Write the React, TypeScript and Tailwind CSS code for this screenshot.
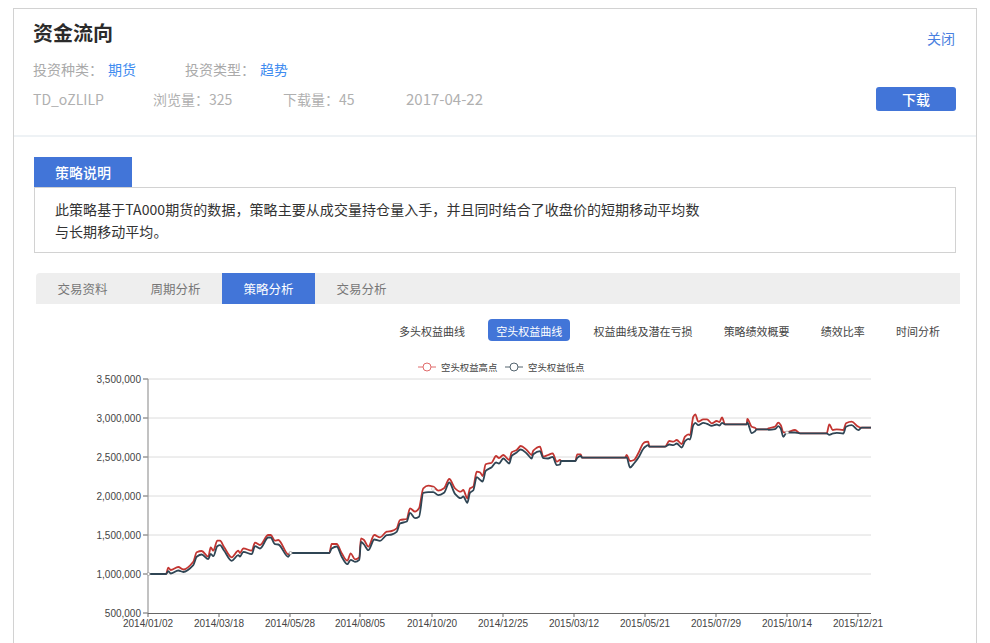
const cjk = 'font-["Noto_Sans_CJK_SC",sans-serif]';

// [x, high y, gap down to the low line]
const points: [number, number, number][] = [
  [148, 574, 0], [166, 574, 0], [168.3, 567.7, 3], [170.7, 570, 3], [178.3, 567, 3], [183.3, 569.5, 2], [193.3, 561.7, 3],
  [196.7, 552.3, 4], [201.7, 551, 3], [208.3, 556.7, 2], [210.7, 547.3, 6], [213.3, 550.7, 5], [217.3, 540.7, 5], [220, 540.7, 4],
  [224, 547, 3], [231.7, 557.3, 3], [238.3, 550.7, 4], [240, 553, 3], [243.3, 548.3, 3], [251.7, 550.7, 3], [255, 542.7, 3],
  [260, 545, 3], [268.3, 535, 2], [270.7, 535, 2], [275, 540.7, 3], [278.3, 540, 4], [288.3, 554.3, 2], [290.7, 553, 0],
  [329.3, 553, 0], [331.7, 544, 4], [336.7, 544, 2], [341.7, 553.3, 3], [347.3, 560.7, 3], [350.7, 553.3, 6], [355, 559.3, 2],
  [359.3, 557.3, 2], [361, 538.3, 3], [364, 540, 4], [368.3, 546.7, 3], [374.3, 535, 4], [380, 537.3, 3], [386.7, 531.7, 3],
  [391.7, 531, 3], [396.7, 528.3, 3], [400, 520, 3], [406.7, 519, 2], [410, 508.3, 4], [415, 511.7, 6], [419, 508.3, 8],
  [423.3, 488.3, 4], [428.3, 485.7, 6], [433.3, 486.7, 5], [438.3, 490.7, 4], [444, 488.3, 4], [449.3, 479, 3], [455, 488.3, 5],
  [460.7, 491.7, 6], [463.3, 490, 6], [467.3, 498.3, 4], [470, 488.3, 4], [473.3, 486.7, 3], [476.7, 471.7, 5], [480, 472.3, 7],
  [482.7, 476, 5], [485.7, 464.3, 6], [491.7, 462.7, 4], [496, 456, 6], [499, 458, 5], [503.3, 455, 3], [509.3, 460, 3],
  [511.7, 452.3, 3], [516.7, 450, 2], [520.7, 446, 3], [526.7, 450, 3], [531.7, 455, 3], [533.3, 450.7, 3], [540, 446.7, 4],
  [543.3, 456.7, 1], [548, 455, 3], [552.7, 453.3, 3], [556.7, 461.7, 3], [560, 460, 4], [561, 461, 0], [574, 461, 0],
  [575.3, 461, 0], [577.3, 454.3, 3], [580.7, 454.3, 1], [582, 457.7, 0], [625, 457.7, 0], [626.7, 455, 2], [630, 461, 6],
  [634, 460, 3], [638.3, 453.3, 4], [643.3, 443.3, 5], [645.5, 442, 4], [648.3, 441.7, 3], [649.3, 446.7, 0], [665, 446.7, 0],
  [669.3, 441, 3], [673.3, 441.7, 3], [676.7, 440, 3], [681.7, 444, 3], [685, 436.7, 4], [688.3, 434.3, 4], [690, 435, 4],
  [693.3, 416.7, 8], [695.3, 414.3, 8], [698.3, 421.7, 3], [703.3, 419.3, 3], [707, 419.3, 4], [711.7, 423.3, 2], [716.7, 421, 3],
  [719.5, 422, 3], [722, 417.3, 5], [725, 424.3, 0], [746.7, 424.3, 0], [747.3, 419, 3], [751.7, 426.7, 6], [755, 427.7, 3],
  [756.7, 429.3, 0], [767.3, 429.3, 0], [768.5, 428.3, 1], [775, 426.7, 2], [778.3, 422.7, 3], [780.7, 425, 3], [783.3, 432.3, 4],
  [786.7, 432.3, 0], [795, 430, 2], [800, 433.3, 0], [826.7, 433.3, 0], [829.3, 424.3, 10], [832.7, 430, 3], [836.7, 429.3, 3],
  [843.3, 430, 3], [846, 423.3, 3], [851.7, 421.7, 3], [858.3, 426.7, 3], [861.7, 427.7, 0], [871, 427.7, 0],
];

// smooth path that does not overshoot, close to what the chart library draws
function smooth(pts: [number, number][]) {
  const slope = (a: [number, number], b: [number, number]) => (b[1] - a[1]) / (b[0] - a[0]);
  const t = pts.map((p, i) => {
    if (i === 0 || i === pts.length - 1) return 0;
    const s0 = slope(pts[i - 1], p);
    const s1 = slope(p, pts[i + 1]);
    return s0 * s1 <= 0 ? 0 : (2 * s0 * s1) / (s0 + s1);
  });
  let d = `M${pts[0][0]} ${pts[0][1]}`;
  for (let i = 1; i < pts.length; i++) {
    const [x0, y0] = pts[i - 1];
    const [x1, y1] = pts[i];
    const h = (x1 - x0) / 3;
    d += `C${(x0 + h).toFixed(1)} ${(y0 + t[i - 1] * h).toFixed(1)} ${(x1 - h).toFixed(1)} ${(y1 - t[i] * h).toFixed(1)} ${x1} ${y1}`;
  }
  return d;
}

const highPath = smooth(points.map(([x, y]) => [x, y]));
const lowPath = smooth(points.map(([x, y, g]) => [x, g > 0 ? y + g + 0.5 : y]));

const yLabels = ['3,500,000', '3,000,000', '2,500,000', '2,000,000', '1,500,000', '1,000,000', '500,000'];
const xLabels = [
  ['2014/01/02', 148], ['2014/03/18', 219], ['2014/05/28', 290], ['2014/08/05', 360],
  ['2014/10/20', 432], ['2014/12/25', 503], ['2015/03/12', 574], ['2015/05/21', 645],
  ['2015/07/29', 716], ['2015/10/14', 787], ['2015/12/21', 858],
] as const;

const tabs = ['交易资料', '周期分析', '策略分析', '交易分析'];
const subTabs = ['多头权益曲线', '空头权益曲线', '权益曲线及潜在亏损', '策略绩效概要', '绩效比率', '时间分析'];

function Chart() {
  return (
    <svg viewBox="36 355 924 288" className="block h-[288px] w-[924px]">
      {yLabels.map((label, i) => {
        const y = 379 + i * 39;
        return (
          <g key={label}>
            {i < 6 && <line x1="148" x2="871" y1={y} y2={y} stroke="#dcdcdc" />}
            <line x1="143" x2="148" y1={y} y2={y} stroke="#666" />
            <text x="141" y={y + 3.5} textAnchor="end" fontSize="10" fill="#444" fontFamily="Liberation Sans">{label}</text>
          </g>
        );
      })}
      <line x1="148" x2="148" y1="379" y2="613" stroke="#999" strokeWidth="1.2" />
      <line x1="148" x2="871" y1="613.5" y2="613.5" stroke="#666" />
      {xLabels.map(([label, x]) => (
        <g key={label}>
          <line x1={x} x2={x} y1="613" y2="617" stroke="#666" />
          <text x={x} y="627" textAnchor="middle" fontSize="10" fill="#444" fontFamily="Liberation Sans">{label}</text>
        </g>
      ))}

      <path d={highPath} fill="none" stroke="#c23531" strokeWidth="1.8" />
      <path d={lowPath} fill="none" stroke="#2f4554" strokeWidth="1.8" />
      <circle cx="148.5" cy="574" r="1.5" fill="#fff" stroke="#999" strokeWidth="0.8" />
      <circle cx="290.5" cy="553" r="1.5" fill="#fff" stroke="#999" strokeWidth="0.8" />
      <circle cx="433" cy="489" r="1.5" fill="#fff" stroke="#ccc" strokeWidth="0.8" />
      <circle cx="787" cy="432.5" r="1.5" fill="#fff" stroke="#bbb" strokeWidth="0.8" />

      {/* legend */}
      <line x1="418" x2="436" y1="367" y2="367" stroke="#e06c6c" />
      <circle cx="427" cy="367" r="4" fill="#fff" stroke="#e06c6c" />
      <text x="441" y="370.5" fontSize="9.4" fill="#444" fontFamily="Noto Sans CJK SC">空头权益高点</text>
      <line x1="505" x2="523" y1="367" y2="367" stroke="#54646f" />
      <circle cx="514" cy="367" r="4" fill="#fff" stroke="#54646f" />
      <text x="528" y="370.5" fontSize="9.4" fill="#444" fontFamily="Noto Sans CJK SC">空头权益低点</text>
    </svg>
  );
}

export default function App() {
  return (
    <div className={`h-[643px] w-[990px] overflow-hidden bg-white pt-2 pl-[13px] ${cjk}`}>
      <div className="h-[700px] w-[964px] border border-[#d2d2d2]">
        {/* header */}
        <div className="h-[128px] border-b-2 border-[#eef2f5] pr-5 pl-[19px]">
          <div className="flex justify-between pt-[10px]">
            <h1 className="text-xl leading-7 font-bold text-[#2b2b2b]">资金流向</h1>
            <a className="mt-[9px] mr-px text-sm leading-5 text-[#4a80e0]">关闭</a>
          </div>
          <div className="mt-[11px] flex text-sm leading-5 text-[#aaaaaa]">
            <span>投资种类：</span>
            <span className="ml-[5px] w-[77px] text-[#3f8cf0]">期货</span>
            <span>投资类型：</span>
            <span className="ml-[5px] text-[#3f8cf0]">趋势</span>
          </div>
          <div className="mt-2 flex items-start text-sm leading-6 text-[#b0b0b0]">
            <span className="w-[120px]">TD_oZLILP</span>
            <span className="w-[130px]">浏览量：325</span>
            <span className="w-[123px]">下载量：45</span>
            <span className="text-[15px]">2017-04-22</span>
            <button className="ml-auto h-6 w-20 rounded-[3px] bg-[#4275d8] text-sm font-medium text-white">下载</button>
          </div>
        </div>

        {/* description */}
        <div className="mt-5 ml-5 w-[922px]">
          <div className="h-[30px] w-[98px] bg-[#4275d8] pl-[21px] text-sm leading-[30px] font-medium text-white">策略说明</div>
          <div className="h-[66px] border border-[#d2d2d2] px-5 pt-[10px] text-sm leading-[22px] tracking-[0.06px] text-[#333333]">
            此策略基于TA000期货的数据，策略主要从成交量持仓量入手，并且同时结合了收盘价的短期移动平均数
            <br />
            与长期移动平均。
          </div>
        </div>

        {/* tabs */}
        <div className="mt-5 ml-[22px] flex h-[31px] w-[924px] rounded-tl bg-[#eeeeee]">
          {tabs.map((tab) => (
            <div
              key={tab}
              className={
                tab === '策略分析'
                  ? 'h-[31px] w-[93px] bg-[#4275d8] text-center text-[12.5px] leading-[31px] text-white'
                  : 'h-[31px] w-[93px] text-center text-[12.5px] leading-[31px] text-[#777777]'
              }
            >
              {tab}
            </div>
          ))}
        </div>

        {/* sub tabs */}
        <div className="mt-[15px] ml-[22px] flex w-[924px] justify-end gap-[15.2px] pr-3">
          {subTabs.map((tab) => (
            <div
              key={tab}
              className={
                tab === '空头权益曲线'
                  ? 'h-[22px] rounded-sm bg-[#4275d8] px-2 text-[11px] leading-[24px] text-white'
                  : 'h-[22px] px-2 text-[11px] leading-[24px] text-[#444444]'
              }
            >
              {tab}
            </div>
          ))}
        </div>

        <div className="mt-[14px] ml-[22px]">
          <Chart />
        </div>
      </div>
    </div>
  );
}
